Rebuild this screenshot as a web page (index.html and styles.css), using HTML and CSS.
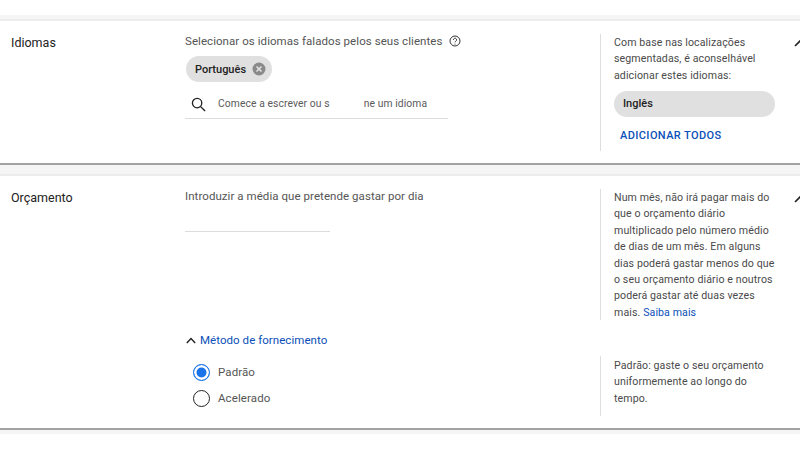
FILE: index.html
```html
<!DOCTYPE html>
<html lang="pt">
<head>
<meta charset="utf-8">
<title>Idiomas e orçamento</title>
<link rel="stylesheet" href="styles.css">
</head>
<body>
<main class="page">
  <section class="card card-lang">
    <h2 class="card-title">Idiomas</h2>
    <div class="card-main">
      <p class="prompt">Selecionar os idiomas falados pelos seus clientes
        <svg class="help" viewBox="0 0 12 12" width="12" height="12" aria-hidden="true"><circle cx="6" cy="6" r="5" fill="none" stroke="#333" stroke-width="1"/><path d="M4.400 4.800a1.600 1.600 0 1 1 2.400 1.400c-.5.3-.8.6-.8 1.100" fill="none" stroke="#333" stroke-width="1"/><circle cx="6" cy="9" r=".6" fill="#333"/></svg>
      </p>
      <span class="chip">Português
        <svg class="chip-x" viewBox="0 0 14 14" width="14" height="14" aria-hidden="true"><circle cx="7" cy="7" r="6.500" fill="#8a8a8a"/><path d="M4.500 4.500l5 5M9.500 4.500l-5 5" stroke="#e4e4e4" stroke-width="1.500"/></svg>
      </span>
      <div class="search">
        <svg class="search-icon" viewBox="0 0 16 16" width="15" height="15" aria-hidden="true"><circle cx="6.500" cy="6.500" r="5" fill="none" stroke="#222" stroke-width="1.400"/><path d="M10 10l5 5" stroke="#222" stroke-width="1.500"/></svg>
        <span class="search-text">Comece a escrever ou s<span class="gap"></span>ne um idioma</span>
      </div>
    </div>
    <aside class="side side-lang">
      <p class="side-text">Com base nas localizações segmentadas, é aconselhável adicionar estes idiomas:</p>
      <div class="suggest">Inglês</div>
      <a class="add-all" href="#">ADICIONAR TODOS</a>
    </aside>
    <svg class="collapse" viewBox="0 0 12 8" width="12" height="8" aria-hidden="true"><path d="M1 7l5-5 5 5" fill="none" stroke="#222" stroke-width="1.600"/></svg>
  </section>

  <section class="card card-budget">
    <div class="budget-top">
      <h2 class="card-title">Orçamento</h2>
      <div class="card-main">
        <p class="prompt">Introduzir a média que pretende gastar por dia</p>
        <div class="amount"></div>
      </div>
      <aside class="side side-budget">
        <p class="side-text">Num mês, não irá pagar mais do que o orçamento diário multiplicado pelo número médio de dias de um mês. Em alguns dias poderá gastar menos do que o seu orçamento diário e noutros poderá gastar até duas vezes mais. <a class="link" href="#">Saiba mais</a></p>
      </aside>
      <svg class="collapse" viewBox="0 0 12 8" width="12" height="8" aria-hidden="true"><path d="M1 7l5-5 5 5" fill="none" stroke="#222" stroke-width="1.600"/></svg>
    </div>
    <div class="budget-bottom">
      <div class="card-main delivery">
        <div class="delivery-head">
          <svg viewBox="0 0 10 7" width="10" height="7" aria-hidden="true"><path d="M.8 6l4.200-4.400L9.200 6" fill="none" stroke="#222" stroke-width="1.400"/></svg>
          <a class="link link-strong" href="#">Método de fornecimento</a>
        </div>
        <div class="radio-row"><span class="radio radio-on"></span>Padrão</div>
        <div class="radio-row"><span class="radio"></span>Acelerado</div>
      </div>
      <aside class="side side-delivery">
        <p class="side-text">Padrão: gaste o seu orçamento uniformemente ao longo do tempo.</p>
      </aside>
    </div>
  </section>
</main>
</body>
</html>
```
FILE: styles.css
```css
* { box-sizing: border-box; }
html, body { margin: 0; padding: 0; }
body {
  width: 800px;
  height: 450px;
  overflow: hidden;
  background: #fff;
  font-family: Roboto, "Liberation Sans", sans-serif;
  color: #555;
}
.page {
  margin-top: 15px;
  padding: 4px 0;
  background: #f5f5f5;
}
.card {
  background: #fff;
  border-top: 2px solid #ececec;
  border-bottom: 2px solid #a3a3a3;
}
.card-lang {
  display: flex;
  height: 146px;
  margin-bottom: 9px;
  padding-top: 13px;
}
.card-budget {
  height: 256px;
  padding-top: 13px;
}
.budget-top { display: flex; height: 144px; }
.budget-bottom { display: flex; }
.card-title {
  flex: none;
  width: 185px;
  margin: 0;
  padding: 1px 0 0 11px;
  font-size: 12.500px;
  font-weight: 400;
  line-height: 16px;
  color: #222;
}
.card-main { flex: none; width: 415px; }
.prompt {
  display: flex;
  align-items: center;
  gap: 7px;
  margin: 0;
  font-size: 11.500px;
  line-height: 14px;
  letter-spacing: .06px;
}
.chip {
  display: inline-flex;
  align-items: center;
  gap: 6px;
  height: 26px;
  margin: 8px 0 0 1px;
  padding: 0 6px 0 9px;
  border-radius: 13px;
  background: #e0e0e0;
  font-size: 11px;
  font-weight: 500;
  color: #222;
}
.search {
  display: flex;
  align-items: center;
  width: 263px;
  height: 32px;
  margin-top: 5px;
  padding: 2px 0 0 6px;
  border-bottom: 1px solid #dcdcdc;
}
.search-icon { margin-top: 1px; }
.search-text {
  margin-left: 12px;
  font-size: 10.300px;
  letter-spacing: .1px;
  color: #5a5a5a;
}
.gap { display: inline-block; width: 34px; }
.amount {
  width: 145px;
  height: 29px;
  border-bottom: 1px solid #dcdcdc;
}
.side {
  flex: none;
  width: 175px;
  padding: 1px 0 0 13px;
  border-left: 1px solid #dedede;
}
.side-lang { height: 117px; }
.side-budget { height: 131px; }
.side-delivery { height: 60px; margin-top: 23px; padding-top: 2px; }
.side-text {
  margin: 0;
  font-size: 10.600px;
  line-height: 16.400px;
  letter-spacing: .1px;
  color: #4a4a4a;
}
.suggest {
  height: 26px;
  margin-top: 7px;
  padding-left: 9px;
  border-radius: 13px;
  background: #e0e0e0;
  font-size: 11px;
  font-weight: 500;
  line-height: 26px;
  color: #222;
}
.add-all {
  display: block;
  margin: 12px 0 0 6px;
  font-size: 11px;
  font-weight: 500;
  line-height: 14px;
  letter-spacing: .4px;
  color: #0b4fb8;
  text-decoration: none;
}
.collapse { flex: none; margin: 5px 0 0 19px; }
.budget-top .collapse { margin-top: 6px; }
.link { color: #0b4fb8; text-decoration: none; }
.link-strong { font-size: 11.500px; letter-spacing: .05px; }
.delivery-head {
  display: flex;
  align-items: center;
  gap: 4px;
  height: 14px;
  padding-left: 1px;
}
.card-main.delivery { margin-left: 185px; }
.radio-row {
  display: flex;
  align-items: center;
  gap: 8px;
  height: 26px;
  padding-left: 8px;
  font-size: 11.500px;
  letter-spacing: .1px;
}
.delivery-head + .radio-row { margin-top: 12px; }
.radio {
  width: 17px;
  height: 17px;
  border: 1.500px solid #222;
  border-radius: 50%;
  background: #fff;
}
.radio-on {
  border-color: #1a73e8;
  background: #1a73e8;
  box-shadow: inset 0 0 0 2.500px #fff;
}
```
